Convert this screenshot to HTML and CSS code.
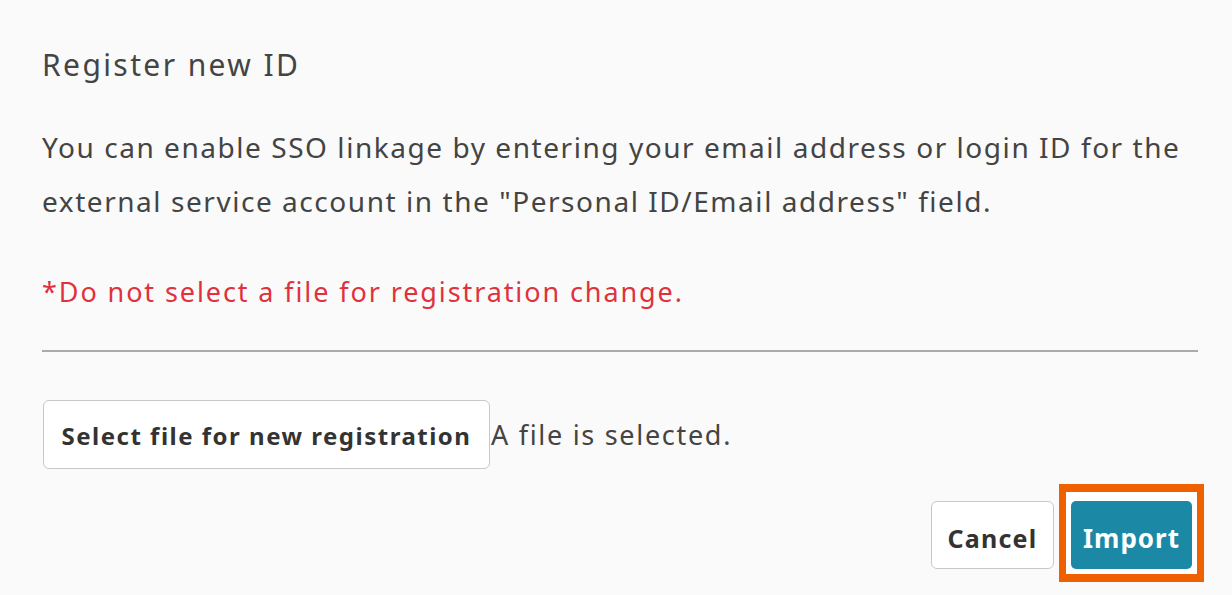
FILE: index.html
```html
<!DOCTYPE html>
<html lang="en">
<head>
    <meta charset="UTF-8">
    <title>Register new ID</title>
    <link rel="stylesheet" href="styles.css">
</head>
<body>
<div class="dialog">
    <h2 class="title">Register new ID</h2>

    <p class="desc">You can enable SSO linkage by entering your email address or login ID for the external service account in the "Personal ID/Email address" field.</p>

    <p class="warning">*Do not select a file for registration change.</p>

    <hr class="rule">

    <div class="file-row">
        <button class="btn file-btn">Select file for new registration</button>
        <span class="file-name">A file is selected.</span>
    </div>

    <div class="actions">
        <button class="btn cancel-btn">Cancel</button>
        <span class="highlight">
            <button class="btn import-btn">Import</button>
        </span>
    </div>
</div>
</body>
</html>
```

FILE: styles.css
```css
* { box-sizing: border-box; }

body {
    margin: 0;
    background: #fafafa;
    font-family: "Noto Sans", "Open Sans", sans-serif;
    color: #444;
}

.dialog {
    padding: 38px 34px 0 42px;
}

.title {
    margin: 0;
    font-size: 30px;
    font-weight: 400;
    line-height: 54px;
    letter-spacing: 2.4px;
    color: #444;
}

.desc {
    margin: 28px 0 0;
    font-size: 28px;
    line-height: 54px;
    letter-spacing: 1.55px;
}

.warning {
    margin: 37px 0 0;
    font-size: 27px;
    line-height: 54px;
    letter-spacing: 1.9px;
    color: #e0323c;
}

.rule {
    margin: 31px 0 0;
    border: none;
    border-top: 2px solid #aaa;
}

.file-row {
    display: flex;
    align-items: center;
    margin-top: 48px;
}

.btn {
    font-family: "Noto Sans", "Open Sans", sans-serif;
    font-weight: 700;
    cursor: pointer;
}

.file-btn {
    width: 447px;
    height: 69px;
    padding: 2px 0 0;
    margin-left: 1px;
    background: #fff;
    border: 1px solid #c8c8c8;
    border-radius: 6px;
    font-size: 24px;
    letter-spacing: 1.5px;
    color: #333;
}

.file-name {
    font-size: 27px;
    letter-spacing: 1.7px;
    color: #444;
    padding-left: 1px;
}

.actions {
    display: flex;
    justify-content: flex-end;
    align-items: flex-start;
    gap: 5px;
    margin-top: 15px;
    margin-right: -6px;
}

.cancel-btn {
    width: 123px;
    height: 68px;
    margin-top: 17px;
    padding: 6px 0 0;
    background: #fff;
    border: 1px solid #c8c8c8;
    border-radius: 6px;
    font-size: 25px;
    letter-spacing: 1.2px;
    color: #333;
}

.highlight {
    display: block;
    border: 8px solid #ef6100;
    border-left-width: 7px;
    border-right-width: 7px;
    padding: 9px 5px 5px;
    background: #fff;
}

.import-btn {
    display: block;
    width: 121px;
    height: 68px;
    padding: 6px 0 0;
    background: #1b88a6;
    border: none;
    border-radius: 5px;
    font-size: 26px;
    letter-spacing: 1px;
    color: #fff;
}
```
